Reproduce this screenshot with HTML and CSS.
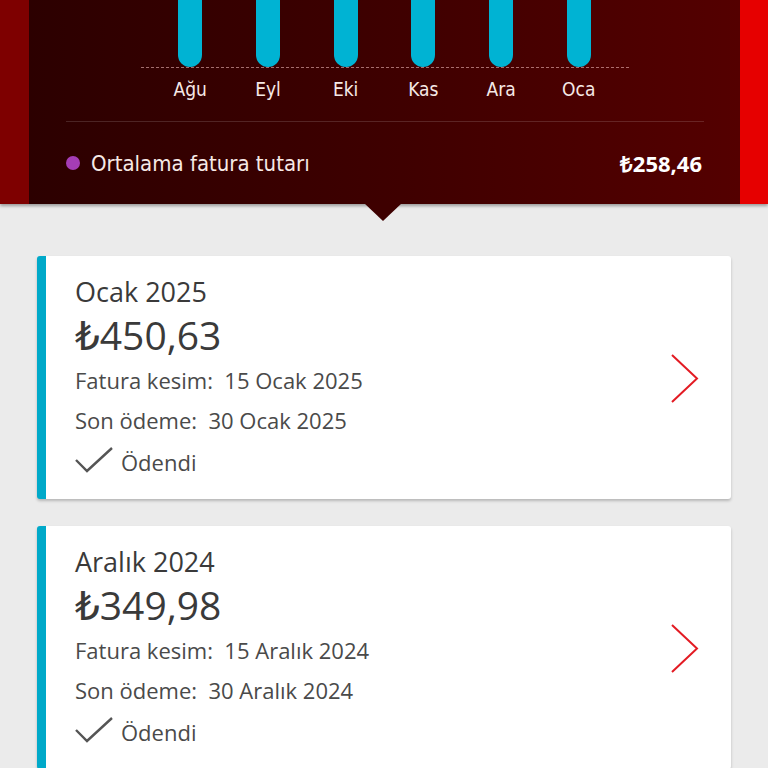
FILE: index.html
```html
<!DOCTYPE html>
<html lang="tr">
<head>
<meta charset="utf-8">
<title>Faturalarım</title>
<link rel="stylesheet" href="styles.css">
</head>
<body>
  <header class="hero">
    <div class="hero-edge hero-edge-left"></div>
    <div class="hero-panel">
      <div class="chart">
        <div class="bars">
          <div class="bar-col"><span class="bar"></span></div>
          <div class="bar-col"><span class="bar"></span></div>
          <div class="bar-col"><span class="bar"></span></div>
          <div class="bar-col"><span class="bar"></span></div>
          <div class="bar-col"><span class="bar"></span></div>
          <div class="bar-col"><span class="bar"></span></div>
        </div>
        <div class="baseline"></div>
        <div class="months">
          <span>Ağu</span>
          <span>Eyl</span>
          <span>Eki</span>
          <span>Kas</span>
          <span>Ara</span>
          <span>Oca</span>
        </div>
      </div>
      <div class="avg-row">
        <span class="avg-label"><span class="dot"></span>Ortalama fatura tutarı</span>
        <span class="avg-value">₺258,46</span>
      </div>
    </div>
    <div class="hero-edge hero-edge-right"></div>
  </header>

  <main class="bill-list">
    <article class="bill-card">
      <div class="bill-info">
        <div class="bill-month">Ocak 2025</div>
        <div class="bill-amount">₺450,63</div>
        <div class="bill-line">Fatura kesim:  15 Ocak 2025</div>
        <div class="bill-line">Son ödeme:  30 Ocak 2025</div>
        <div class="bill-status">
          <svg class="check" viewBox="0 0 38 26" width="38" height="26"><path d="M1 13 L12 24 L37 1" fill="none" stroke="#555" stroke-width="2.4"/></svg>
          <span>Ödendi</span>
        </div>
      </div>
      <svg class="chevron" viewBox="0 0 28 50" width="28" height="50"><path d="M1 1 L26 24.5 L1 48" fill="none" stroke="#e31b23" stroke-width="2"/></svg>
    </article>

    <article class="bill-card">
      <div class="bill-info">
        <div class="bill-month">Aralık 2024</div>
        <div class="bill-amount">₺349,98</div>
        <div class="bill-line">Fatura kesim:  15 Aralık 2024</div>
        <div class="bill-line">Son ödeme:  30 Aralık 2024</div>
        <div class="bill-status">
          <svg class="check" viewBox="0 0 38 26" width="38" height="26"><path d="M1 13 L12 24 L37 1" fill="none" stroke="#555" stroke-width="2.4"/></svg>
          <span>Ödendi</span>
        </div>
      </div>
      <svg class="chevron" viewBox="0 0 28 50" width="28" height="50"><path d="M1 1 L26 24.5 L1 48" fill="none" stroke="#e31b23" stroke-width="2"/></svg>
    </article>
  </main>
</body>
</html>
```

FILE: styles.css
```css
* {
  box-sizing: border-box;
}

html, body {
  margin: 0;
  padding: 0;
  background: #ebebeb;
  height: 768px;
  overflow: hidden;
}

body {
  font-family: "Open Sans", "DejaVu Sans", sans-serif;
  color: #333;
}

/* ---- summary header ---- */
.hero {
  position: relative;
  display: flex;
  height: 204px;
  box-shadow: 0 2px 3px rgba(0, 0, 0, 0.35);
  z-index: 1;
}

/* pointer under the summary */
.hero::after {
  content: "";
  position: absolute;
  left: 364px;
  top: 203px;
  width: 0;
  height: 0;
  border-left: 19px solid transparent;
  border-right: 19px solid transparent;
  border-top: 18px solid #3e0000;
}

.hero-edge {
  width: 28px;
  flex: none;
}

.hero-edge-left {
  background: #7e0000;
  width: 29px;
}

.hero-edge-right {
  background: #e60000;
}

.hero-panel {
  flex: 1;
  background: linear-gradient(90deg, #2c0000 0%, #3e0000 50%, #540000 100%);
  display: flex;
  flex-direction: column;
  font-family: "Liberation Sans Narrow", "DejaVu Sans Condensed", "Roboto Condensed", Lato, sans-serif;
  color: #f6e9e6;
}

.chart {
  margin: 0 auto;
  border-bottom: 1px solid rgba(255, 255, 255, 0.14);
  width: 638px;
}

.bars,
.months {
  display: grid;
  grid-template-columns: repeat(6, 77.7px);
  justify-content: center;
}

.bar-col {
  display: flex;
  justify-content: center;
  height: 67px;
}

.bar {
  display: block;
  width: 24px;
  height: 67px;
  background: #00b3d3;
  border-radius: 0 0 12px 12px;
}

.baseline {
  width: 488px;
  margin: 0 auto;
  border-top: 1.5px dashed rgba(255, 200, 200, 0.55);
  height: 0;
}

.months {
  padding-top: 8px;
  height: 53px;
}

.months span {
  text-align: center;
  font-size: 19px;
  line-height: 26px;
}

.avg-row {
  display: flex;
  justify-content: space-between;
  align-items: center;
  margin: 0 38px 0 36px;
  height: 82px;
}

.avg-label {
  display: flex;
  align-items: center;
  font-size: 22px;
}

.dot {
  width: 14px;
  height: 14px;
  border-radius: 50%;
  background: #a53db5;
  margin: 0 11px 0 1px;
}

.avg-value {
  font-family: "Open Sans", sans-serif;
  font-weight: 700;
  font-size: 22px;
  color: #fff;
}

/* ---- bill cards ---- */
.bill-list {
  display: flex;
  flex-direction: column;
  gap: 27px;
  padding: 52px 37px 0 37px;
}

.bill-card {
  display: flex;
  align-items: center;
  justify-content: space-between;
  background: #fff;
  border-left: 9px solid #00a9c9;
  border-radius: 3px;
  box-shadow: 0 2px 3px rgba(0, 0, 0, 0.22);
  height: 243px;
  padding: 18px 32px 0 29px;
}

.bill-info {
  align-self: flex-start;
}

.bill-month {
  font-size: 27px;
  line-height: 36px;
  color: #3a3a3a;
}

.bill-amount {
  font-size: 39px;
  line-height: 50px;
  color: #3a3a3a;
}

.bill-line {
  font-size: 22px;
  line-height: 40px;
  color: #4a4a4a;
  white-space: pre;
}

.bill-status {
  display: flex;
  align-items: center;
  gap: 8px;
  font-size: 22px;
  line-height: 44px;
  color: #4a4a4a;
}

.check {
  display: block;
  margin-top: -4px;
}

.chevron {
  display: block;
  margin-top: -16px;
}
```
